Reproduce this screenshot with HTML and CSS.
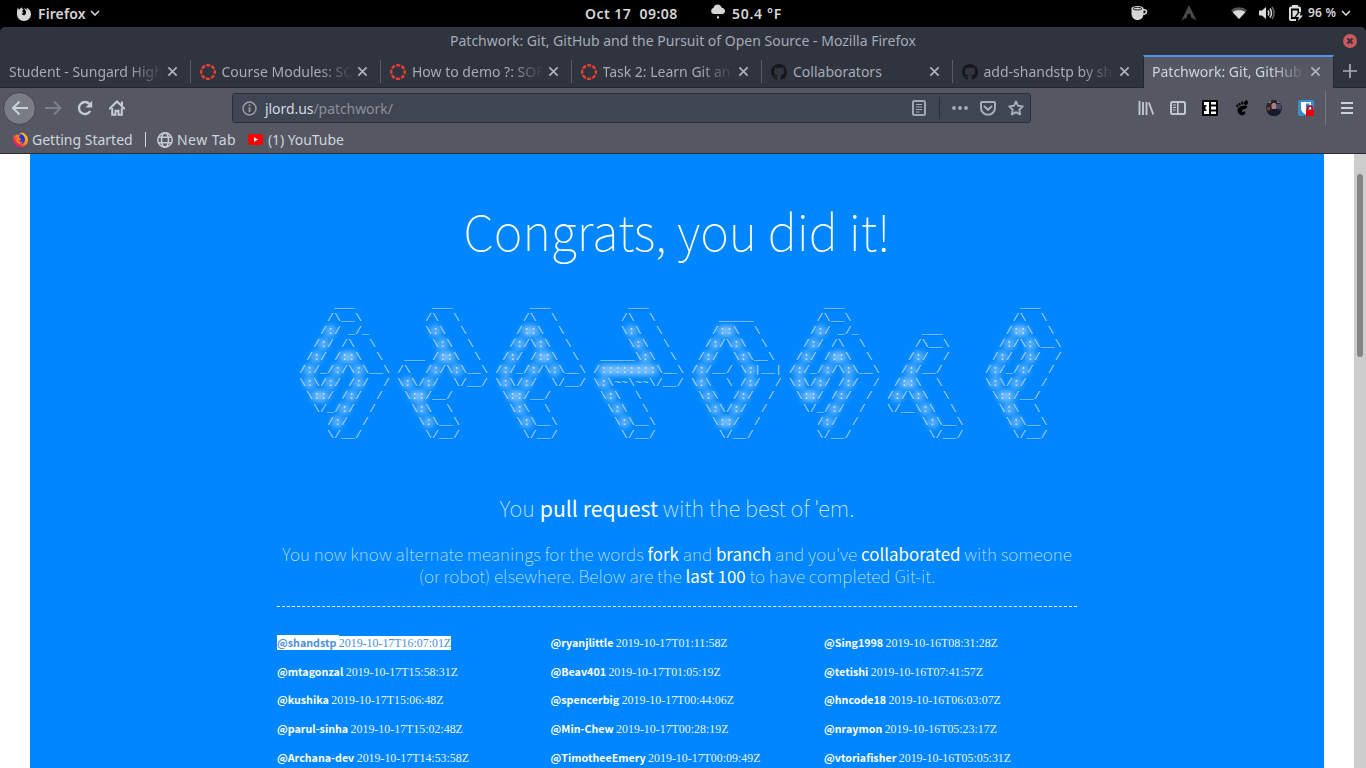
FILE: index.html
```html
<!DOCTYPE html>
<html lang="en">
<head>
<meta charset="utf-8">
<title>Patchwork: Git, GitHub and the Pursuit of Open Source</title>
<link rel="stylesheet" href="styles.css">
</head>
<body>
<svg class="defs" width="0" height="0" aria-hidden="true">
  <symbol id="canvas" viewBox="0 0 16 16"><circle cx="8" cy="8" r="6.800" fill="none" stroke="#e73f30" stroke-width="2.400" stroke-dasharray="4 1.340" stroke-dashoffset="2"/></symbol>
  <symbol id="github" viewBox="0 0 16 16"><path fill="#15171b" d="M8 0C3.58 0 0 3.58 0 8c0 3.54 2.29 6.53 5.47 7.59.4.07.55-.17.55-.38 0-.19-.01-.82-.01-1.49-2.01.37-2.53-.49-2.69-.94-.09-.23-.48-.94-.82-1.13-.28-.15-.68-.52-.01-.53.63-.01 1.08.58 1.23.82.72 1.21 1.87.87 2.33.66.07-.52.28-.87.51-1.07-1.78-.2-3.64-.89-3.64-3.95 0-.87.31-1.59.82-2.15-.08-.2-.36-1.02.08-2.12 0 0 .67-.21 2.2.82.64-.18 1.32-.27 2-.27s1.36.09 2 .27c1.53-1.04 2.2-.82 2.2-.82.44 1.1.16 1.92.08 2.12.51.56.82 1.27.82 2.15 0 3.07-1.87 3.75-3.65 3.95.29.25.54.73.54 1.48 0 1.07-.01 1.93-.01 2.2 0 .21.15.46.55.38A8.01 8.01 0 0 0 16 8c0-4.42-3.58-8-8-8z"/></symbol>
  <symbol id="close" viewBox="0 0 12 12"><path d="M1.500 1.500l9 9M10.500 1.500l-9 9" stroke="currentColor" stroke-width="1.900" fill="none"/></symbol>
  <symbol id="chev" viewBox="0 0 10 6"><path d="M1 1l4 4 4-4" stroke="currentColor" stroke-width="1.600" fill="none"/></symbol>
</svg>

<header class="topbar">
  <div class="tb-app">
    <svg width="16" height="16" viewBox="0 0 16 16"><path fill="#d6d6d6" d="M2 1.500c0 1 .6 1.600 1.500 2C4 2.500 5.200 2 6 1.200c0 1 .4 1.800 1.400 2.300-.3.800-1.400 1-1.400 2 1 .2 1.400.5 1.300 1-.3.700-1.500.8-1.500 1.600.6 1.300 2.300 1.500 3.300.6 1-.9 1.100-2.300.7-3.500-.5-1.200-1.200-2-2-2.600 1.600 0 2.800.6 3.600 1.600-.1-1.200-.6-2-1.300-2.700 3 .9 4.900 3.400 4.900 6.500 0 4-3 7-7 7S1 12 1 8c0-2.400.1-4.500 1-6.500z"/></svg>
    <span class="t-firefox">Firefox</span>
    <svg class="chev" width="10" height="6"><use href="#chev"/></svg>
  </div>
  <span class="t-date">Oct 17&nbsp; 09:08</span>
  <svg class="cloud" width="16" height="16" viewBox="0 0 16 16"><path fill="#d6d6d6" d="M4 10a3 3 0 0 1-2.800-3C1 5 2.500 4.200 3.500 4 3.800 1.800 5.500.5 7.500.5c2.200 0 3.800 1.400 4.200 3.200C13.500 3.800 15 5 15 7c0 1.800-1.300 3-3 3zM8 11.300l1 1.700a1.100 1.100 0 1 1-2 0z"/></svg>
  <span class="t-temp">50.4 °F</span>
  <div class="tray">
    <svg width="17" height="16" viewBox="0 0 17 16"><path fill="#d6d6d6" d="M.5 3.500C.5 2 3 1 6.500 1s6 1 6 2.500V8c0 5-2.500 7-6 7S.5 12.500.5 8z"/><path d="M12 4.700h1.500c3 0 3 4.500-1.500 4.500" fill="none" stroke="#d6d6d6" stroke-width="1.500"/><ellipse cx="6.500" cy="3.700" rx="4.500" ry="1.300" fill="none" stroke="#222"/></svg>
    <svg class="arch" width="16" height="16" viewBox="0 0 16 16"><path fill="#4a4a4a" d="M8 0l7.500 15.500L10 12.500C10 9.500 9.200 8.800 8 8.800s-2 .7-2 3.700L.5 15.500z"/></svg>
    <svg class="wifi" width="16" height="12" viewBox="0 0 16 12"><path fill="#555" d="M8 12L0 3.500C4.500-.9 11.500-.9 16 3.500z"/><path fill="#dcdcdc" d="M8 12L1.700 5.200C5 2.600 11 2.600 14.300 5.200z"/></svg>
    <svg class="vol" width="16" height="14" viewBox="0 0 16 14"><path fill="#dcdcdc" d="M0 4.500h3L7 1v12L3 9.500H0z"/><path d="M9 4.500q1.600 2.500 0 5M11 2.500q3 4.500 0 9" fill="none" stroke="#dcdcdc" stroke-width="1.500"/><path d="M13 .8q4 6.200 0 12.400" fill="none" stroke="#666" stroke-width="1.500"/></svg>
    <svg class="bat" width="15" height="16" viewBox="0 0 15 16"><path d="M3.500 2.500h6.500a1 1 0 0 1 1 1V7M7 15H2a1 1 0 0 1-1-1V3.500a1 1 0 0 1 1-1h2V1h4v1.500" fill="none" stroke="#dcdcdc" stroke-width="2"/><path d="M3.500 5.500h5V8L5.500 12h-2z" fill="#dcdcdc"/><path d="M11.500 6.500L7 12h3l-1 4 5-5.500h-3z" fill="#dcdcdc"/></svg>
    <span class="t-bat">96 %</span>
    <svg class="chev2" width="10" height="6"><use href="#chev"/></svg>
  </div>
</header>

<section class="window">
  <div class="titlebar">
    <span class="t-title">Patchwork: Git, GitHub and the Pursuit of Open Source - Mozilla Firefox</span>
    <svg class="winclose" width="14" height="14" viewBox="0 0 14 14"><circle cx="7" cy="7" r="7" fill="#cc575d"/><path d="M4.500 4.500l5 5M9.500 4.500l-5 5" stroke="#2f343f" stroke-width="2"/></svg>
  </div>

  <div class="tabs">
    <div class="tab"><span class="label fade">Student - Sungard High</span><svg class="x"><use href="#close"/></svg></div>
    <div class="tab"><svg class="fav"><use href="#canvas"/></svg><span class="label fade">Course Modules: SOF</span><svg class="x"><use href="#close"/></svg></div>
    <div class="tab"><svg class="fav"><use href="#canvas"/></svg><span class="label fade">How to demo ?: SOFT</span><svg class="x"><use href="#close"/></svg></div>
    <div class="tab"><svg class="fav"><use href="#canvas"/></svg><span class="label fade">Task 2: Learn Git and</span><svg class="x"><use href="#close"/></svg></div>
    <div class="tab"><svg class="fav"><use href="#github"/></svg><span class="label">Collaborators</span><svg class="x"><use href="#close"/></svg></div>
    <div class="tab last"><svg class="fav"><use href="#github"/></svg><span class="label fade">add-shandstp by shan</span><svg class="x"><use href="#close"/></svg></div>
    <div class="tab active"><span class="label fade">Patchwork: Git, GitHub a</span><svg class="x"><use href="#close"/></svg></div>
    <div class="newtab"><svg width="14" height="14" viewBox="0 0 14 14"><path d="M7 0v14M0 7h14" stroke="#a8aeb9" stroke-width="1.700"/></svg></div>
  </div>

  <div class="nav">
    <div class="back"><svg width="18" height="16" viewBox="0 0 18 16"><path d="M17 8H2M8.500 1.500L2 8l6.500 6.500" fill="none" stroke="#cbd2dc" stroke-width="2"/></svg></div>
    <svg class="fwd" width="17" height="16" viewBox="0 0 17 16"><path d="M0 8h15M9 1.500L15.500 8 9 14.500" fill="none" stroke="#7d818b" stroke-width="2"/></svg>
    <svg class="reload" width="16" height="16" viewBox="0 0 16 16"><path d="M12.500 4A6 6 0 1 0 13.200 11" fill="none" stroke="#c6cdd8" stroke-width="2.300"/><path d="M15.200.8v6.700H8.500z" fill="#c6cdd8"/></svg>
    <svg class="home" width="16" height="16" viewBox="0 0 16 16"><path d="M.8 8.500L8 1.500l7.200 7" fill="none" stroke="#c6cdd8" stroke-width="2" stroke-linecap="round"/><path d="M3.200 8v6.800h3.300v-4h3v4h3.300V8" fill="none" stroke="#c6cdd8" stroke-width="2"/><path d="M12 1.500h2v4h-2z" fill="#c6cdd8"/></svg>
    <div class="url">
      <svg width="15" height="15" viewBox="0 0 15 15"><circle cx="7.500" cy="7.500" r="6.500" fill="none" stroke="#9da1ab" stroke-width="1.400"/><path d="M7.500 6.300V11M7.500 3.500v1.600" stroke="#9da1ab" stroke-width="1.700"/></svg>
      <span class="t-url">jlord.us<span class="path">/patchwork/</span></span>
      <svg class="reader" width="14" height="16" viewBox="0 0 14 16"><rect x="1" y="1" width="12" height="14" rx="1.500" fill="none" stroke="#a2a8b3" stroke-width="2"/><path d="M4 4.500h6M4 7h6M4 9.500h6M4 12h3.500" stroke="#a2a8b3"/></svg>
      <i class="sep"></i>
      <svg class="dots" width="16" height="4" viewBox="0 0 16 4"><g fill="#a8aeb9"><circle cx="2" cy="2" r="1.900"/><circle cx="8" cy="2" r="1.900"/><circle cx="14" cy="2" r="1.900"/></g></svg>
      <svg class="pocket" width="16" height="15" viewBox="0 0 16 15"><path d="M2 1h12a1 1 0 0 1 1 1v5a7 6.800 0 0 1-14 0V2a1 1 0 0 1 1-1z" fill="none" stroke="#a8aeb9" stroke-width="2"/><path d="M4.500 5.500L8 8.800l3.500-3.300" fill="none" stroke="#a8aeb9" stroke-width="2" stroke-linecap="round"/></svg>
      <svg class="star" width="16" height="16" viewBox="0 0 16 16"><path d="M8 1.500l2 4.300 4.800.6-3.500 3.300.9 4.800L8 12.200l-4.200 2.300.9-4.800L1.200 6.400 6 5.800z" fill="none" stroke="#a8aeb9" stroke-width="1.900" stroke-linejoin="round"/></svg>
    </div>
    <div class="tools">
      <svg width="16" height="16" viewBox="0 0 16 16"><path d="M1.500 1v14M5 2v13M8.500 2v13M10.800 2.500l4.500 12" stroke="#c0c6d2" stroke-width="1.900"/></svg>
      <svg width="16" height="16" viewBox="0 0 16 16"><rect x="1" y="2" width="14" height="12" rx="1.500" fill="none" stroke="#c0c6d2" stroke-width="2"/><path d="M7.800 2v12" stroke="#c0c6d2" stroke-width="1.600"/><path d="M3 5h3M3 7.500h3M3 10h2.500" stroke="#c0c6d2"/></svg>
      <svg width="16" height="16" viewBox="0 0 16 16"><rect width="16" height="16" rx="1.500" fill="#000"/><path d="M2 2h5v3H2zM3.500 6.500H7v3H3.500zM2 11h5v3H2zM4.500 2H7v12H4.500zM9 2h5v2.500H9zM9 6.500h5v3H9zM9 11.500h5V14H9z" fill="#fff"/></svg>
      <svg width="16" height="16" viewBox="0 0 16 16"><g fill="#000"><ellipse cx="12" cy="2.800" rx="1.800" ry="2.500" transform="rotate(20 12 2.800)"/><ellipse cx="8.300" cy="3" rx="1.200" ry="1.800"/><ellipse cx="5.500" cy="4.300" rx="1.100" ry="1.500"/><ellipse cx="3.200" cy="6" rx="1" ry="1.400"/><path d="M13 6C10 5 4 6 3.500 9.500 3 13 6 15.800 9 15.200c2.500-.5 2.800-3.500 1.800-3.900-1.300-.5-1.200 1.200-2.200.8-1.400-.5-1-2 1-2.600C12.500 8.700 14 7 13 6z"/></g></svg>
      <svg width="16" height="16" viewBox="0 0 16 16"><clipPath id="av"><circle cx="8" cy="8" r="8"/></clipPath><g clip-path="url(#av)"><rect width="16" height="16" fill="#2b2534"/><rect x="0" y="0" width="16" height="3" fill="#77727c"/><rect x="5" y="0" width="6" height="4" fill="#2a2028"/><rect x="5.500" y="3" width="5" height="6.500" rx="2" fill="#a77f80"/><rect x="1" y="7" width="3" height="3" fill="#813c23"/><rect x="11" y="4" width="4" height="5" fill="#42496c"/><path d="M2 16v-4l5-3h3l5 3v4z" fill="#171a2d"/></g></svg>
      <svg width="16" height="16" viewBox="0 0 16 16"><rect width="16" height="16" rx="2" fill="#3c8dcb"/><path d="M3 2h10v6q0 4-5 6.500Q3 12 3 8z" fill="#fff"/><path d="M8 3.500h3.500V8q0 2.500-3.500 4.500z" fill="#3c8dcb"/><path d="M9.500 9.500V8.500a2.500 2.500 0 0 1 5 0v1" fill="none" stroke="#c20007" stroke-width="1.400"/><rect x="8" y="9.500" width="8" height="6.500" fill="#e80009"/></svg>
    </div>
    <i class="navsep"></i>
    <svg class="menu" width="12" height="12" viewBox="0 0 12 12"><path d="M0 1h12M0 6h12M0 11h12" stroke="#cbd2dc" stroke-width="2"/></svg>
  </div>

  <div class="bookmarks">
    <svg width="15" height="15" viewBox="0 0 15 15"><defs><linearGradient id="fx" x1="1" y1="0" x2="0" y2="1"><stop offset="0" stop-color="#ffe226"/><stop offset=".45" stop-color="#ff8a16"/><stop offset=".8" stop-color="#f5156c"/></linearGradient></defs><path d="M1 3l1.500 1L3 2l2 1.500L8 .5c4 .5 7 3.500 7 7.500a7.300 7 0 0 1-14.600 0C.3 6 .4 4.500 1 3z" fill="url(#fx)"/><path d="M7 2c3 0 5 2.500 5 5.500S10 12 7.500 12 4 10 4 8.500l3 .5 1-2-2-1.500z" fill="#2b35d5"/><path d="M4 6l3 .2L5.500 8l2 2.300 2-1.500-1 3H5L3 9z" fill="#ff7b14"/></svg>
    <span class="b1">Getting Started</span>
    <i class="bsep"></i>
    <svg class="globe" width="16" height="16" viewBox="0 0 16 16"><g fill="none" stroke="#c6ccd6" stroke-width="1.500"><circle cx="8" cy="8" r="7.200"/><ellipse cx="8" cy="8" rx="3.500" ry="7.200"/><path d="M1.500 5.200h13M1.500 10.800h13"/></g></svg>
    <span class="b2">New Tab</span>
    <svg class="yt" width="15" height="11" viewBox="0 0 15 11"><rect width="15" height="11" rx="2.500" fill="#f00"/><path d="M6 3.200l4 2.300-4 2.300z" fill="#fff"/></svg>
    <span class="b3">(1) YouTube</span>
  </div>
</section>

<main class="viewport">
  <article class="page">
    <h1>Congrats, you did it!</h1>
    <pre class="art" id="art"></pre>
    <h2>You <b>pull request</b> with the best of 'em.</h2>
    <p class="lead">You now know alternate meanings for the words <b>fork</b> and <b>branch</b> and you've <b>collaborated</b> with someone<br>(or robot) elsewhere. Below are the <b>last 100</b> to have completed Git-it.</p>
    <div class="people">
      <div class="person selected"><b>@shandstp </b><span>2019-10-17T16:07:01Z</span></div>
      <div class="person"><b>@ryanjlittle </b><span>2019-10-17T01:11:58Z</span></div>
      <div class="person"><b>@Sing1998 </b><span>2019-10-16T08:31:28Z</span></div>
      <div class="person"><b>@mtagonzal </b><span>2019-10-17T15:58:31Z</span></div>
      <div class="person"><b>@Beav401 </b><span>2019-10-17T01:05:19Z</span></div>
      <div class="person"><b>@tetishi </b><span>2019-10-16T07:41:57Z</span></div>
      <div class="person"><b>@kushika </b><span>2019-10-17T15:06:48Z</span></div>
      <div class="person"><b>@spencerbig </b><span>2019-10-17T00:44:06Z</span></div>
      <div class="person"><b>@hncode18 </b><span>2019-10-16T06:03:07Z</span></div>
      <div class="person"><b>@parul-sinha </b><span>2019-10-17T15:02:48Z</span></div>
      <div class="person"><b>@Min-Chew </b><span>2019-10-17T00:28:19Z</span></div>
      <div class="person"><b>@nraymon </b><span>2019-10-16T05:23:17Z</span></div>
      <div class="person"><b>@Archana-dev </b><span>2019-10-17T14:53:58Z</span></div>
      <div class="person"><b>@TimotheeEmery </b><span>2019-10-17T00:09:49Z</span></div>
      <div class="person"><b>@vtoriafisher </b><span>2019-10-16T05:05:31Z</span></div>
    </div>
  </article>
  <div class="scrollbar"><div class="thumb"></div></div>
</main>
<script src="art.js"></script>
</body>
</html>
```

FILE: art.js
```js
// Banner rows: eight isometric letters, each in a 14-character cell.
const rows = [
  ['     ___', '     ___', '     ___', '     ___', '', '     ___', '', '     ___'],
  ['    /\\__\\', '    /\\  \\', '    /\\  \\', '    /\\  \\', '    _____', '    /\\__\\', '', '    /\\  \\'],
  ['   /:/ _/_', '    \\:\\  \\', '   /::\\  \\', '    \\:\\  \\', '   /::\\  \\', '   /:/ _/_', '     ___', '   /::\\  \\'],
  ['  /:/ /\\  \\', '     \\:\\  \\', '  /:/\\:\\  \\', '     \\:\\  \\', '  /:/\\:\\  \\', '  /:/ /\\  \\', '    /\\__\\', '  /:/\\:\\__\\'],
  [' /:/ /::\\  \\', ' ___ /::\\  \\', ' /:/ /::\\  \\', ' _____\\:\\  \\', ' /:/  \\:\\__\\', ' /:/ /::\\  \\', '   /:/  /', ' /:/ /:/  /'],
  ['/:/_/:/\\:\\__\\', '/\\  /:/\\:\\__\\', '/:/_/:/\\:\\__\\', '/::::::::\\__\\', '/:/__/ \\:|__|', '/:/_/:/\\:\\__\\', '  /:/__/', '/:/_/:/  /'],
  ['\\:\\/:/ /:/  /', '\\:\\/:/  \\/__/', '\\:\\/:/  \\/__/', '\\:\\~~\\~~\\/__/', '\\:\\  \\ /:/  /', '\\:\\/:/ /:/  /', ' /::\\  \\', '\\:\\/:/  /'],
  [' \\::/ /:/  /', ' \\::/__/', ' \\::/__/', ' \\:\\  \\', ' \\:\\  /:/  /', ' \\::/ /:/  /', '/:/\\:\\  \\', ' \\::/__/'],
  ['  \\/_/:/  /', '  \\:\\  \\', '  \\:\\  \\', '  \\:\\  \\', '  \\:\\/:/  /', '  \\/_/:/  /', '\\/__\\:\\  \\', '  \\:\\  \\'],
  ['    /:/  /', '   \\:\\__\\', '   \\:\\__\\', '   \\:\\__\\', '   \\::/  /', '    /:/  /', '     \\:\\__\\', '   \\:\\__\\'],
  ['    \\/__/', '    \\/__/', '    \\/__/', '    \\/__/', '    \\/__/', '    \\/__/', '      \\/__/', '    \\/__/']
];
document.getElementById('art').innerHTML = rows
  .map(r => r.map(c => c.padEnd(14)).join('').replace(/:/g, '<i>:</i>'))
  .map(line => '<div class="row">' + line + '</div>')
  .join('');
```

FILE: styles.css
```css
* { box-sizing: border-box; }
body { margin: 0; width: 1366px; height: 768px; overflow: hidden; background: #000; font-family: "Noto Sans", sans-serif; font-size: 14px; display: flex; flex-direction: column; }
svg { flex: none; display: block; }
.defs { position: absolute; }
span { white-space: nowrap; }

.topbar { height: 27px; flex: none; display: flex; align-items: center; color: #d6d6d6; font-weight: 600; font-size: 14px; }
.topbar span { margin-top: -1px; }
.tb-app { display: flex; align-items: center; width: 585px; padding-left: 16px; }
.t-firefox { margin-left: 6px; letter-spacing: .1px; }
.chev { margin-left: 4px; margin-top: -1px; }
.t-date { width: 125px; letter-spacing: .48px; }
.cloud { margin-top: -3px; }
.t-temp { margin-left: 6px; letter-spacing: .7px; }
.tray { margin-left: auto; display: flex; align-items: center; padding: 0 15px 1px 0; }
.arch { margin-left: 33px; }
.wifi { margin-left: 34px; }
.vol { margin-left: 12px; }
.bat { margin-left: 14px; }
.t-bat { margin-left: 4px; font-size: 12px; width: 28px; letter-spacing: .2px; }
.chev2 { margin-left: 5px; }

.window { height: 127px; flex: none; background: #2f343f; border-radius: 5px 5px 0 0; display: flex; flex-direction: column; }
.titlebar { height: 28px; display: flex; align-items: center; justify-content: flex-end; padding-right: 9px; color: #a5abb7; }
.t-title { width: 466px; margin-right: 427px; margin-top: -1px; }

.tabs { height: 33px; display: flex; color: #a5abb7; border-bottom: 1px solid #23262f; }
.tab { width: 190.500px; display: flex; align-items: center; padding: 1px 12px 0 9px; background: linear-gradient(#585c66, #585c66) right 5px / 1px 23px no-repeat; }
.tab.last { background: none; }
.tab .label { flex: 1; min-width: 0; overflow: hidden; line-height: 24px; }
.fade { -webkit-mask-image: linear-gradient(to right, #000 calc(100% - 34px), transparent); mask-image: linear-gradient(to right, #000 calc(100% - 34px), transparent); }
.fav { width: 16px; height: 16px; margin: 0 6px 0 0; }
.x { width: 11px; height: 11px; margin-left: 4px; margin-right: 1px; color: #abb1bd; }
.tab.active { height: 33px; background: #555863; border-top: 2px solid #5294e2; border-left: 1px solid #23262f; border-right: 1px solid #23262f; color: #cfd5de; padding: 0 11px 2px 8px; }
.newtab { flex: 1; display: flex; align-items: center; justify-content: center; }

.nav { height: 40px; background: #555863; display: flex; align-items: center; }
.back { width: 33px; height: 33px; margin-left: 3px; border-radius: 50%; background: #797c84; border: 1px solid #42454f; display: flex; align-items: center; justify-content: center; }
.fwd { margin-left: 9px; }
.reload { margin-left: 15px; }
.home { margin-left: 16px; }
.url { width: 799px; height: 30px; margin-left: 107px; background: #404552; border: 1px solid #2b2e39; border-radius: 3px; display: flex; align-items: center; padding: 0 6px 0 9px; }
.t-url { margin-left: 8px; color: #d3dae3; flex: 1; letter-spacing: -.06px; }
.path { color: #8b8f99; }
.sep { width: 1px; height: 22px; background: #2b2e39; margin: 0 12px 0 13px; }
.pocket { margin-left: 12px; }
.star { margin-left: 12px; }
.tools { display: flex; gap: 16px; margin-left: 107px; }
.navsep { width: 1px; height: 34px; background: #747781; margin-left: 11px; }
.menu { margin-left: 15px; }

.bookmarks { height: 26px; background: #555863; border-bottom: 1px solid #2b2e39; display: flex; align-items: center; padding: 0 0 2px 13px; color: #cfd5de; }
.b1 { margin-left: 4px; width: 102px; }
.bsep { width: 1px; height: 15px; background: #cfd5de; margin-left: 11px; }
.globe { margin-left: 11px; }
.b2 { margin-left: 4px; width: 60px; letter-spacing: .45px; }
.yt { margin-left: 11px; }
.b3 { margin-left: 5px; letter-spacing: -.08px; }

.viewport { flex: 1; background: #fff; display: flex; min-height: 0; }
.page { width: 1294px; margin-left: 30px; background: #0087ff; color: #fff; overflow: hidden; font-family: "Noto Sans CJK JP", sans-serif; padding: 0 247px; }
h1 { margin: 36px 0 0; height: 80px; line-height: 80px; font-size: 48.900px; font-weight: 100; text-align: center; white-space: nowrap; }
.art { margin: 29px 0 0 22px; font-family: "Liberation Mono", monospace; font-size: 11.670px; line-height: 13px; color: rgba(255,255,255,.72); height: 143px; text-shadow: 0 1px 1px rgba(0,60,140,.25); }
.row { height: 13px; }
.art i { font-style: normal; color: rgba(255,232,225,.85); text-shadow: none; padding: 5px 7px; margin: 0 -7px; background: radial-gradient(circle closest-side at 50% 50%, rgba(255,255,255,.33) 0, rgba(255,255,255,.25) 35%, rgba(255,255,255,.08) 70%, rgba(255,255,255,0) 100%); }
h2 { margin: 49px 0 0; height: 34px; line-height: 34px; font-size: 21.800px; font-weight: 100; text-align: center; white-space: nowrap; color: rgba(255,255,255,.9); }
h2 b, .lead b { font-weight: 400; color: #fff; }
h2 b { font-size: 21.300px; }
.lead { margin: 18px 0 0; height: 64px; line-height: 22px; font-size: 17.200px; font-weight: 100; text-align: center; white-space: nowrap; border-bottom: 1px dashed #fff; color: rgba(255,255,255,.85); }
.lead b { font-size: 16.900px; line-height: 20px; }
.people { display: grid; grid-template-columns: 273.500px 273.500px 254px; grid-auto-rows: 28.700px; margin-top: 21px; }
.person { line-height: 28px; white-space: nowrap; font-size: 12px; }
.person b { font-size: 10.700px; font-weight: 700; }
.person span { font-family: "Liberation Serif", serif; font-size: 11.900px; color: rgba(255,255,255,.93); }
.selected b { background: #fff; color: #4a90d9; }
.selected span { background: #fff; color: #4a90d9; }

.scrollbar { width: 12px; margin-left: 30px; background: #cdcdcd; padding: 20px 3px 0; }
.thumb { width: 6px; height: 183px; border-radius: 3px; background: #828583; }
```
